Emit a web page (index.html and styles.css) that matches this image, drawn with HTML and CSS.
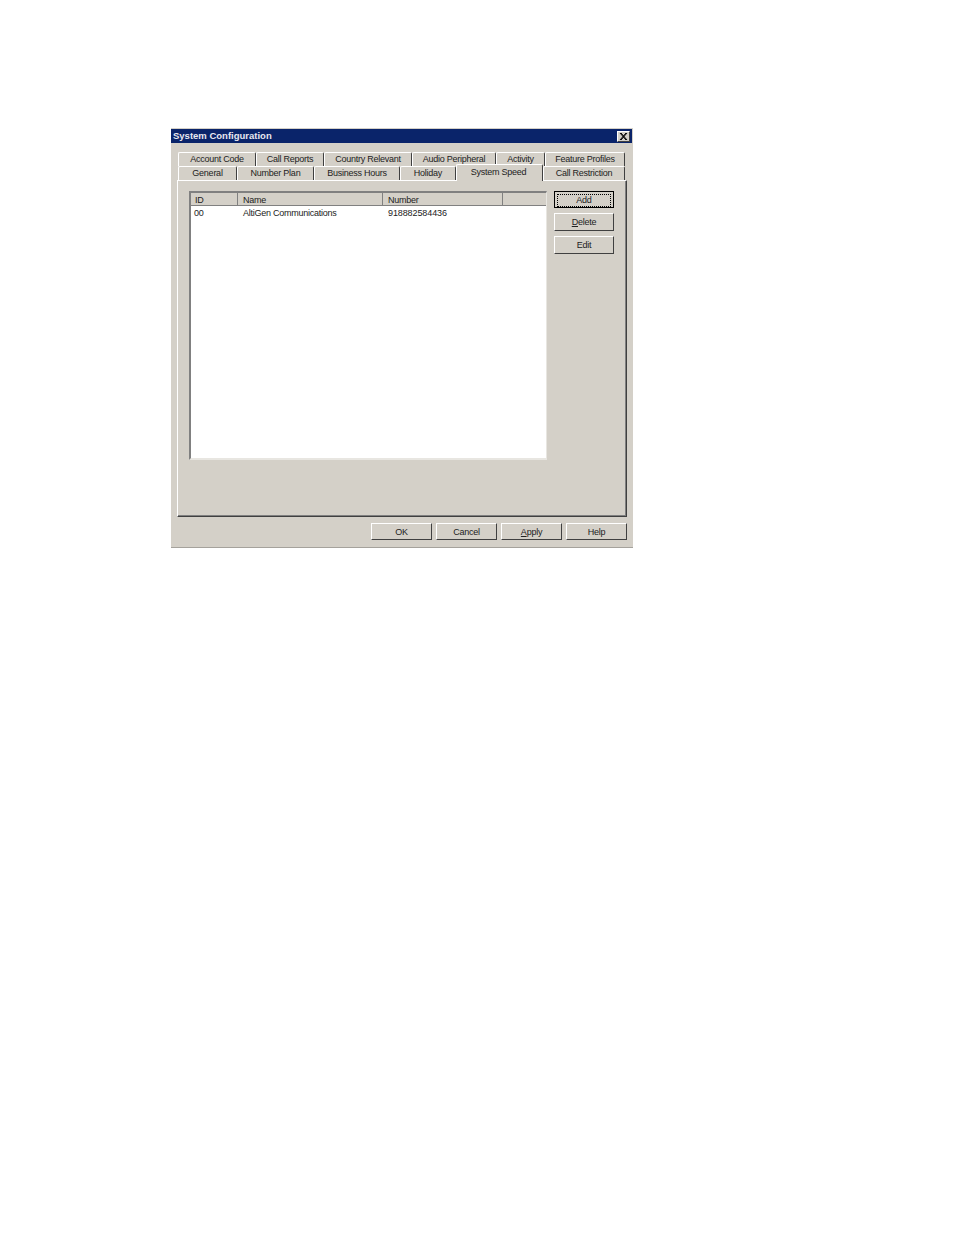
FILE: index.html
```html
<!DOCTYPE html>
<html>

<head>
  <meta charset="UTF-8">
  <title>System Configuration</title>
  <link rel="stylesheet" href="styles.css">
</head>

<body>
  <div class="dialog">
    <div class="titlebar">
      <span class="title">System Configuration</span>
      <span class="close">
        <svg width="9" height="7" viewBox="0 0 9 7">
          <path d="M1 0L7 7M2 0L8 7M7 0L1 7M8 0L2 7" stroke="#000" stroke-width="1" fill="none" />
        </svg>
      </span>
    </div>

    <div class="tabs">
      <div class="tabrow back">
        <div class="tab w78">Account Code</div>
        <div class="tab w68">Call Reports</div>
        <div class="tab w88">Country Relevant</div>
        <div class="tab w84">Audio Peripheral</div>
        <div class="tab w49">Activity</div>
        <div class="tab w80">Feature Profiles</div>
      </div>
      <div class="tabrow">
        <div class="tab w59">General</div>
        <div class="tab w77">Number Plan</div>
        <div class="tab w86">Business Hours</div>
        <div class="tab w56">Holiday</div>
        <div class="tab w87 active">System Speed</div>
        <div class="tab w82">Call Restriction</div>
      </div>
    </div>

    <div class="panel">
      <div class="listview">
        <div class="header">
          <div class="col c1">ID</div>
          <div class="col c2">Name</div>
          <div class="col c3">Number</div>
          <div class="col c4"></div>
        </div>
        <div class="row">
          <div class="cell c1">00</div>
          <div class="cell c2">AltiGen Communications</div>
          <div class="cell c3 digits">918882584436</div>
        </div>
      </div>
      <div class="sidebtns">
        <button class="btn default"><span class="focus">Add</span></button>
        <button class="btn"><u>D</u>elete</button>
        <button class="btn">Edit</button>
      </div>
    </div>

    <div class="footer">
      <button class="btn wide">OK</button>
      <button class="btn wide">Cancel</button>
      <button class="btn wide"><u>A</u>pply</button>
      <button class="btn wide">Help</button>
    </div>
  </div>
</body>

</html>
```

FILE: styles.css
```css
html, body {
  margin: 0;
  background-color: #fff;
}
body {
  padding: 128px 0 0 171px;
  height: 1107px;
  overflow: hidden;
  font-family: "Liberation Sans", Arial, sans-serif;
  font-size: 9px;
  letter-spacing: -0.25px;
  color: #222;
}
.dialog {
  width: 462px;
  height: 420px;
  box-sizing: border-box;
  background-color: #d4d0c8;
  border-top: 1px solid #d4d0c8;
  border-bottom: 1px solid #a5a29c;
}
.titlebar {
  height: 14px;
  margin-right: 1px;
  background-color: #0a246a;
  display: flex;
  align-items: center;
  justify-content: space-between;
  padding: 0 2px;
}
.title {
  color: #e8e8f0;
  font-weight: bold;
  font-size: 9.5px;
  letter-spacing: 0;
  margin-bottom: 2px;
}
.close {
  width: 11px;
  height: 9px;
  background-color: #d4d0c8;
  border: 1px solid;
  border-color: #fff #404040 #404040 #fff;
  display: flex;
  align-items: center;
  justify-content: center;
}
.tabs {
  margin: 9px 0 0 7px;
}
.tabrow {
  display: flex;
  height: 14px;
  position: relative;
}
.tab {
  box-sizing: border-box;
  height: 14px;
  border-top: 1px solid #fff;
  border-left: 1px solid #fff;
  border-right: 1px solid #404040;
  border-radius: 2px 2px 0 0;
  text-align: center;
  line-height: 13px;
  white-space: nowrap;
}
.tab.active {
  height: 17px;
  margin-top: -2px;
  padding-right: 2px;
  line-height: 14px;
  position: relative;
  z-index: 1;
  background-color: #d4d0c8;
}
.w49 { width: 49px; }
.w56 { width: 56px; }
.w59 { width: 59px; }
.w68 { width: 68px; }
.w77 { width: 77px; }
.w78 { width: 78px; }
.w80 { width: 80px; }
.w82 { width: 82px; }
.w84 { width: 84px; }
.w86 { width: 86px; }
.w87 { width: 87px; }
.w88 { width: 88px; }
.panel {
  width: 450px;
  height: 337px;
  margin-left: 6px;
  box-sizing: border-box;
  border-top: 1px solid #fff;
  border-left: 1px solid #fff;
  border-right: 1px solid #404040;
  border-bottom: 1px solid #404040;
  box-shadow: inset -1px -1px 0 #808080;
  padding: 10px 12px 0 11px;
  display: flex;
  align-items: flex-start;
  gap: 7px;
}
.listview {
  width: 358px;
  height: 269px;
  box-sizing: border-box;
  background-color: #fff;
  border-top: 2px solid #808080;
  border-left: 2px solid #808080;
  border-right: 1px solid #e8e6e1;
  border-bottom: 2px solid #e8e6e1;
}
.header {
  display: flex;
  height: 13px;
  background-color: #d4d0c8;
}
.col {
  box-sizing: border-box;
  height: 13px;
  line-height: 14px;
  padding-left: 4px;
  border-right: 1px solid #808080;
  border-bottom: 1px solid #808080;
}
.col.c4 {
  flex: 1;
  border-right: none;
}
.row {
  display: flex;
  height: 15px;
  line-height: 15px;
}
.cell {
  box-sizing: border-box;
  padding-left: 3px;
  white-space: nowrap;
}
.digits {
  letter-spacing: -0.1px;
}
.c1 { width: 47px; }
.c2 { width: 145px; padding-left: 5px; }
.c3 { width: 120px; padding-left: 5px; }
.sidebtns {
  display: flex;
  flex-direction: column;
  gap: 5px;
}
.btn {
  box-sizing: border-box;
  width: 60px;
  height: 18px;
  padding: 0;
  margin: 0;
  background-color: #d4d0c8;
  border: 1px solid;
  border-color: #fff #404040 #404040 #fff;
  font-family: inherit;
  font-size: inherit;
  letter-spacing: inherit;
  color: inherit;
}
.btn.default {
  height: 17px;
  border: 1px solid #000;
  padding: 2px;
}
.focus {
  display: block;
  height: 11px;
  line-height: 10px;
  border: 1px dotted #000;
}
.footer {
  display: flex;
  justify-content: flex-end;
  gap: 4px;
  margin: 6px 6px 0 0;
}
.btn.wide {
  width: 61px;
  height: 17px;
}
```
